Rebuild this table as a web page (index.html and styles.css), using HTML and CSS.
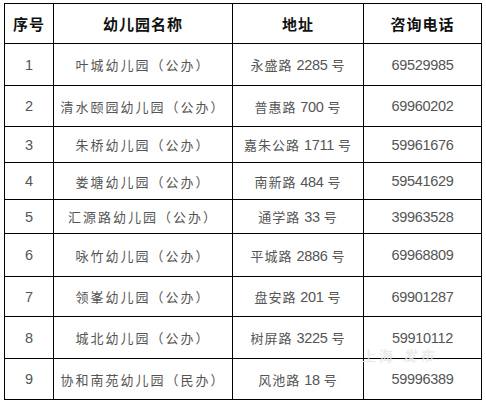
FILE: index.html
```html
<!DOCTYPE html>
<html lang="zh">
<head>
<meta charset="utf-8">
<link rel="stylesheet" href="styles.css">
</head>
<body>
<div class="wrap">
<table class="list">
  <colgroup>
    <col class="c1"><col class="c2"><col class="c3"><col class="c4">
  </colgroup>
  <thead>
    <tr class="h"><th>序号</th><th>幼儿园名称</th><th>地址</th><th>咨询电话</th></tr>
  </thead>
  <tbody>
    <tr class="r42"><td class="num">1</td><td class="name">叶城幼儿园（公办）</td><td class="addr">永盛路 <span class="d">2285</span> 号</td><td class="num">69529985</td></tr>
    <tr class="r41"><td class="num">2</td><td class="name">清水颐园幼儿园（公办）</td><td class="addr">普惠路 <span class="d">700</span> 号</td><td class="num">69960202</td></tr>
    <tr class="r36"><td class="num">3</td><td class="name">朱桥幼儿园（公办）</td><td class="addr">嘉朱公路 <span class="d">1711</span> 号</td><td class="num">59961676</td></tr>
    <tr class="r37"><td class="num">4</td><td class="name">娄塘幼儿园（公办）</td><td class="addr">南新路 <span class="d">484</span> 号</td><td class="num">59541629</td></tr>
    <tr class="r34"><td class="num">5</td><td class="name">汇源路幼儿园（公办）</td><td class="addr">通学路 <span class="d">33</span> 号</td><td class="num">39963528</td></tr>
    <tr class="r43"><td class="num">6</td><td class="name">咏竹幼儿园（公办）</td><td class="addr">平城路 <span class="d">2886</span> 号</td><td class="num">69968809</td></tr>
    <tr class="r40"><td class="num">7</td><td class="name">领峯幼儿园（公办）</td><td class="addr">盘安路 <span class="d">201</span> 号</td><td class="num">69901287</td></tr>
    <tr class="r42"><td class="num">8</td><td class="name">城北幼儿园（公办）</td><td class="addr">树屏路 <span class="d">3225</span> 号</td><td class="num">59910112</td></tr>
    <tr class="r41"><td class="num">9</td><td class="name">协和南苑幼儿园（民办）</td><td class="addr">风池路 <span class="d">18</span> 号</td><td class="num">59996389</td></tr>
  </tbody>
</table>
<div class="mark">上海 <span class="mk2">发布</span></div>
</div>
</body>
</html>
```
FILE: styles.css
```css
html, body {
  margin: 0;
  padding: 0;
  background: #fff;
}
.wrap {
  position: relative;
  padding: 3px 0 0 4px;
}
.list {
  border-collapse: collapse;
  table-layout: fixed;
  width: 478px;
  font-family: "Noto Sans CJK SC", "Liberation Sans", sans-serif;
}
.c1 { width: 49px; }
.c2 { width: 179px; }
.c3 { width: 131px; }
.c4 { width: 118px; }
.list th, .list td {
  border: 1px solid #000;
  padding: 0;
  text-align: center;
  vertical-align: middle;
  white-space: nowrap;
}
.list th {
  font-size: 15px;
  font-weight: 700;
  color: #111;
  letter-spacing: 1px;
}
.list td {
  font-size: 13px;
  color: #555;
  letter-spacing: 2px;
}
.list td.num {
  font-family: "Liberation Sans", sans-serif;
  font-size: 14.5px;
  letter-spacing: -0.3px;
  color: #555;
}
.list td.addr { letter-spacing: 1px; }
.d {
  font-family: "Liberation Sans", sans-serif;
  font-size: 14.5px;
  letter-spacing: -0.3px;
}
.h { height: 40px; }
.r34 { height: 34px; }
.r36 { height: 36px; }
.r37 { height: 37px; }
.r40 { height: 40px; }
.r41 { height: 41px; }
.r42 { height: 42px; }
.r43 { height: 43px; }
.mark {
  position: absolute;
  left: 362px;
  top: 348px;
  line-height: 14px;
  font-family: "Noto Sans CJK SC", sans-serif;
  font-size: 14px;
  color: rgba(235, 235, 235, 0.85);
  letter-spacing: 3px;
  text-shadow: 0 0 1px rgba(200, 200, 200, 0.5);
}
.mk2 { font-style: italic; }
```
